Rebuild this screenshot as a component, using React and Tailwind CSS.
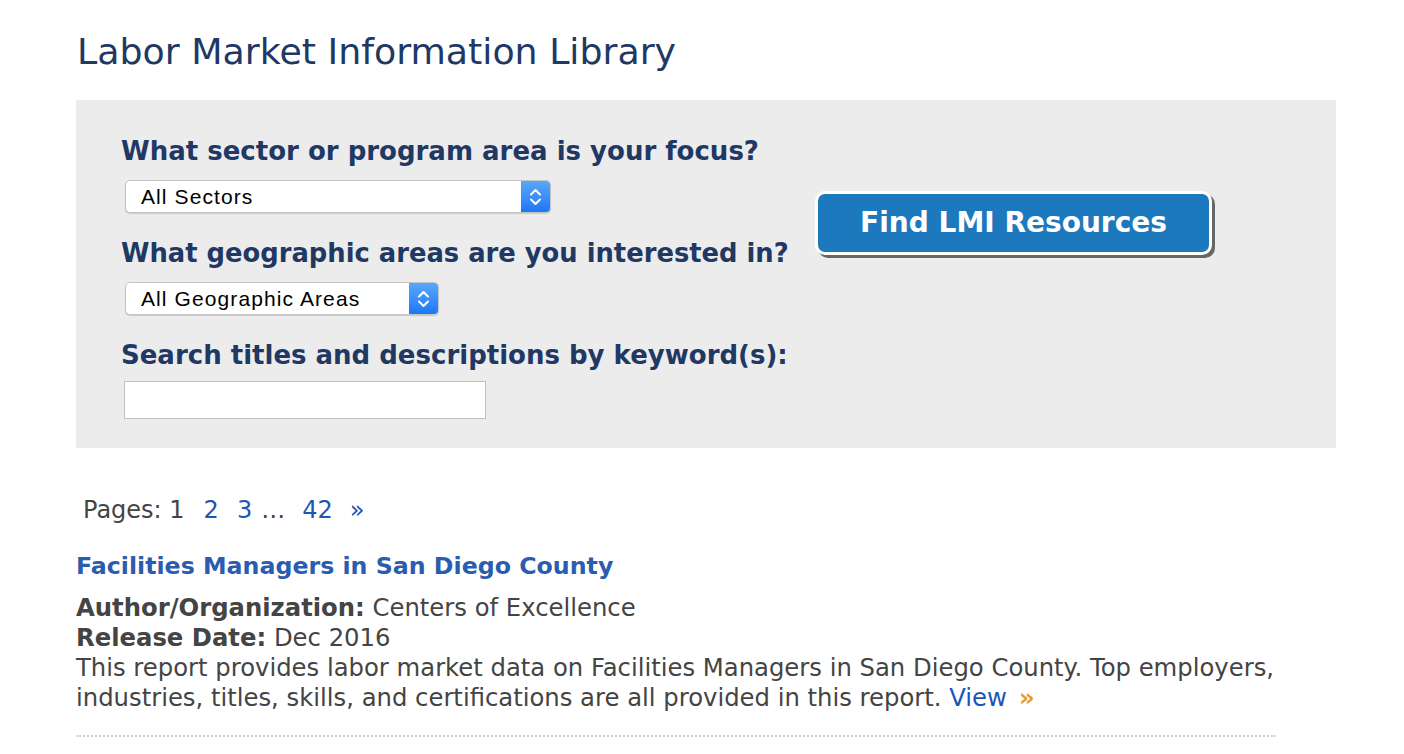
import React from 'react';

function FakeSelect({ label, width }) {
  return (
    <div className={`flex h-[33px] ${width} rounded-[5px] border border-[#c4c4c4] bg-white shadow-[0_1px_1px_rgba(0,0,0,0.15)] overflow-hidden`}>
      <div className="flex-1 flex items-center pl-[15px] font-['Liberation_Sans',sans-serif] text-[21px] tracking-[1.1px] text-black">{label}</div>
      <div className="w-[29px] flex items-center justify-center bg-gradient-to-b from-[#5aa6fb] to-[#1a78f2]">
        <svg width="13" height="20" viewBox="0 0 13 20" fill="none" stroke="white" strokeWidth="2" strokeLinecap="round" strokeLinejoin="round">
          <path d="M2 7.5 L6.5 3 L11 7.5" />
          <path d="M2 12.5 L6.5 17 L11 12.5" />
        </svg>
      </div>
    </div>
  );
}

export default function App() {
  return (
    <div className="min-h-[754px] bg-white font-['DejaVu_Sans',sans-serif]">
      <div className="pl-[76px] pt-[28px] w-[1336px]">
        <h1 className="text-[36.3px] leading-[48px] text-[#1f3864] font-normal pl-[1px]">Labor Market Information Library</h1>

        <div className="mt-[24px] bg-[#ececec] h-[348px] flex pl-[45px] pt-[35px]">
          <div className="w-[694px] flex flex-col">
            <p className="text-[26px] leading-[32px] font-bold text-[#1f3864] whitespace-nowrap">What sector or program area is your focus?</p>
            <div className="mt-[13px] ml-[4px]"><FakeSelect label="All Sectors" width="w-[426px]" /></div>
            <p className="mt-[24px] text-[25.8px] leading-[32px] font-bold text-[#1f3864] whitespace-nowrap">What geographic areas are you interested in?</p>
            <div className="mt-[13px] ml-[4px]"><FakeSelect label="All Geographic Areas" width="w-[314px]" /></div>
            <p className="mt-[24px] text-[26px] leading-[32px] font-bold text-[#1f3864] whitespace-nowrap">Search titles and descriptions by keyword(s):</p>
            <input className="mt-[10px] ml-[3px] w-[362px] h-[38px] bg-white border border-[#c0c0c0] outline-none" />
          </div>
          <div className="pt-[56px]">
            <button className="w-[397px] h-[64px] rounded-[10px] border-[3px] border-white bg-[#1c79bd] shadow-[3px_3px_0_#666] text-white text-[28px] font-bold">Find LMI Resources</button>
          </div>
        </div>

        <div className="mt-[47px] pl-[7px] flex items-center text-[24px] leading-[30px] text-[#444]">
          <span>Pages: 1</span>
          <span className="ml-[19px] text-[#1a56b8]">2</span>
          <span className="ml-[18px] text-[#1a56b8]">3</span>
          <span className="ml-[9px]">…</span>
          <span className="ml-[17px] text-[#1a56b8]">42</span>
          <span className="ml-[17px] text-[#1a56b8]">»</span>
        </div>

        <div className="w-[1200px] mt-[26px]">
          <h2 className="text-[23.7px] leading-[30px] font-bold text-[#2a5db0]">Facilities Managers in San Diego County</h2>
          <div className="mt-[12px] text-[24.3px] leading-[30px] text-[#444]">
            <p><span className="font-bold">Author/Organization:</span> Centers of Excellence</p>
            <p><span className="font-bold">Release Date:</span> Dec 2016</p>
            <p>This report provides labor market data on Facilities Managers in San Diego County. Top employers, industries, titles, skills, and certifications are all provided in this report. <span className="text-[#1a56b8]">View</span><span className="ml-[12px] text-[#e8982a] font-bold">»</span></p>
          </div>
          <div className="mt-[22px] border-b-2 border-dotted border-[#d0d0d0]" />
        </div>
      </div>
    </div>
  );
}
